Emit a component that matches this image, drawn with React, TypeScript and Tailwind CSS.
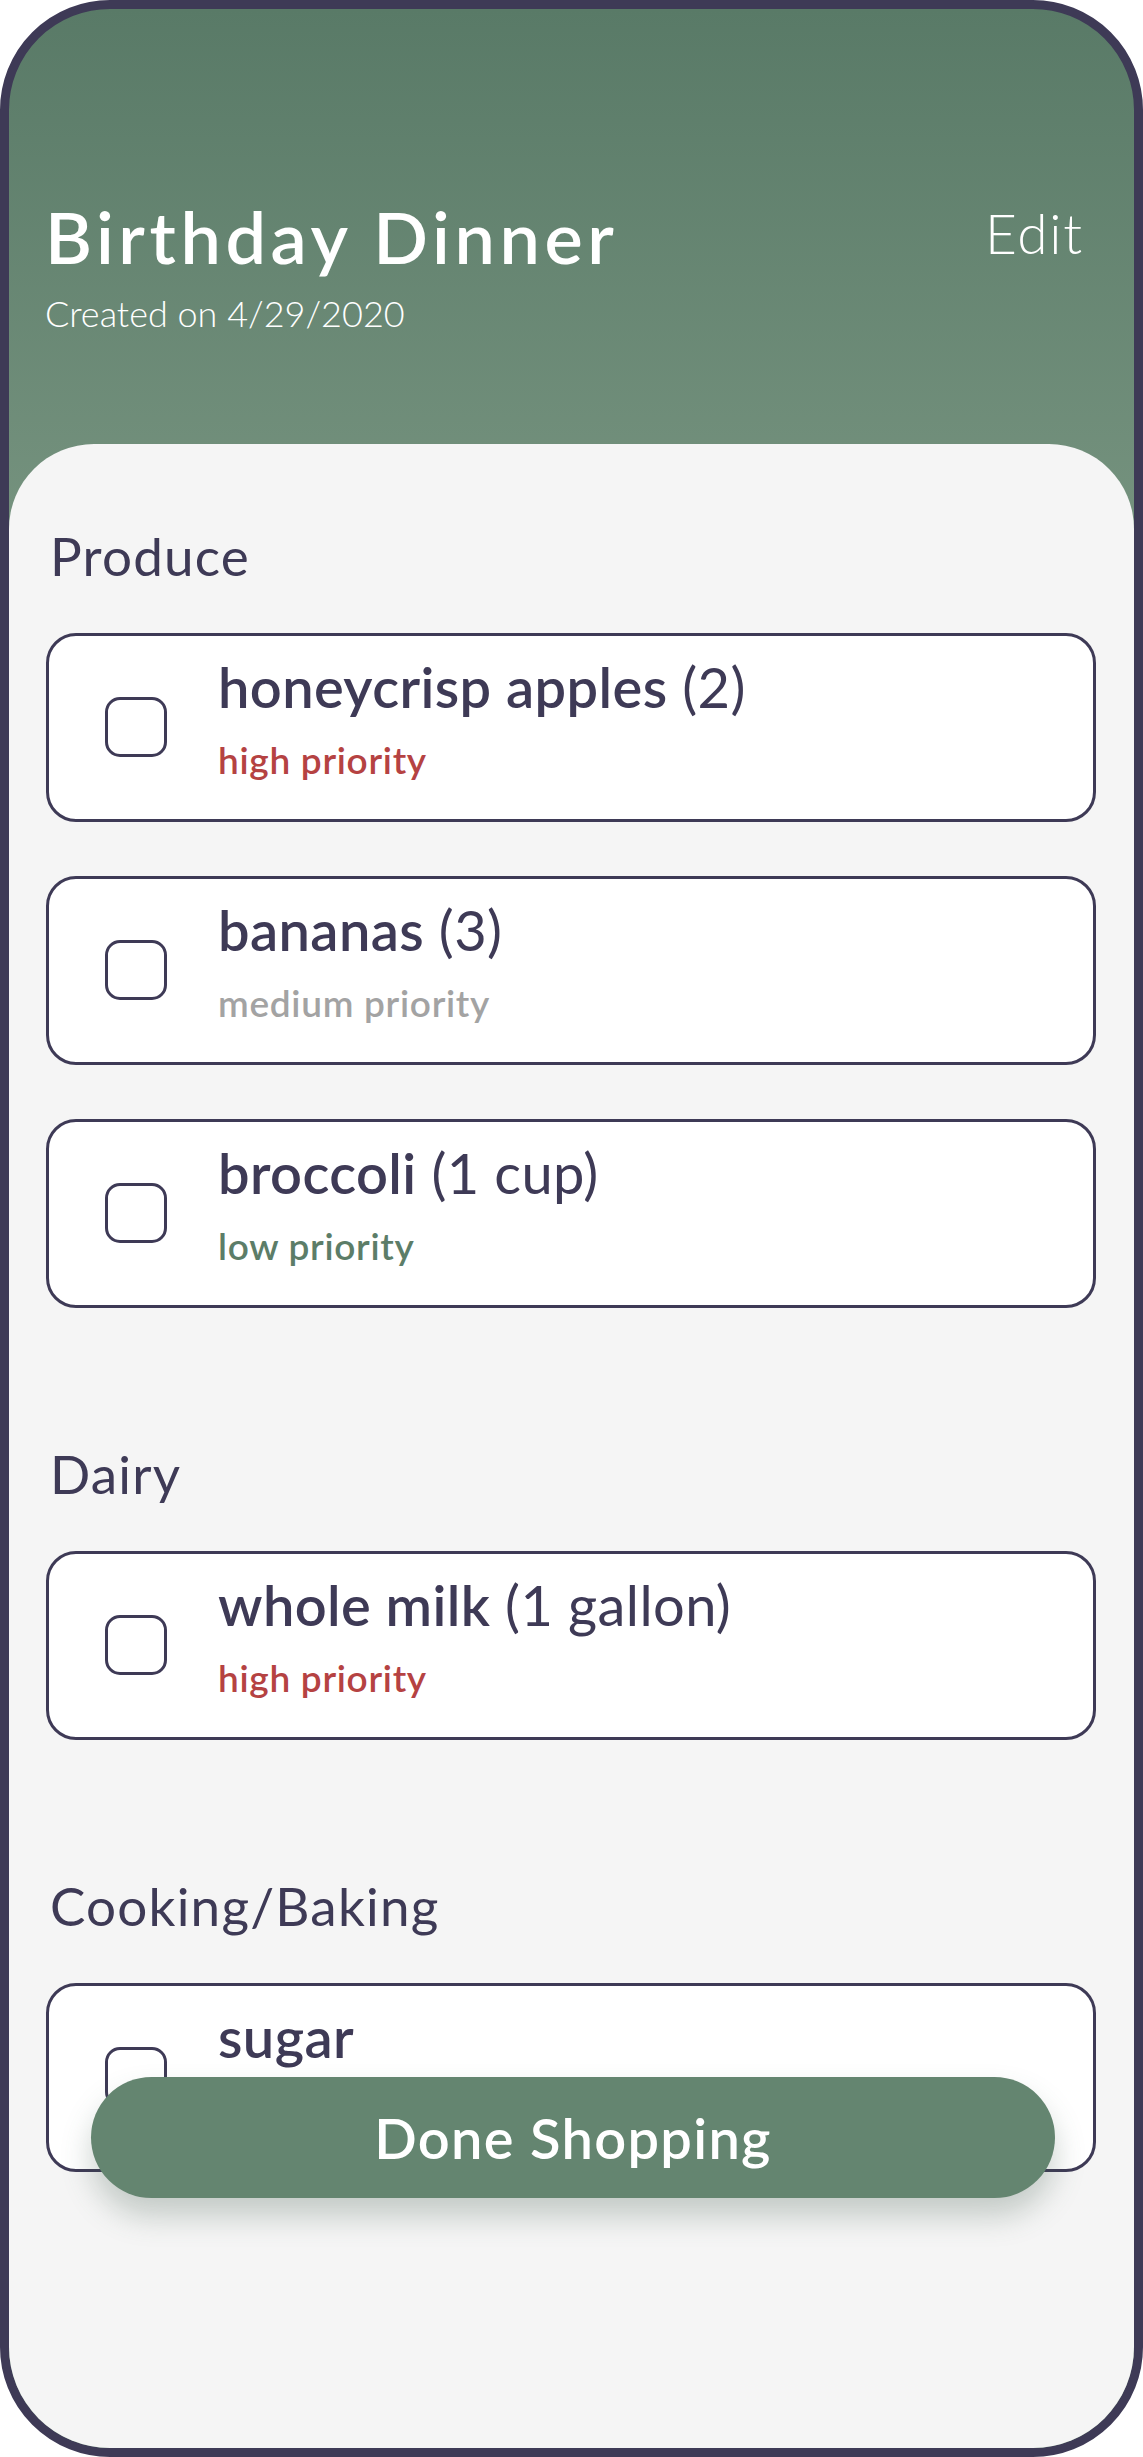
type Item = {
  name: string;
  qty?: string;
  priority?: "high" | "medium" | "low";
};

type Section = {
  title: string;
  items: Item[];
};

const sections: Section[] = [
  {
    title: "Produce",
    items: [
      { name: "honeycrisp apples", qty: "(2)", priority: "high" },
      { name: "bananas", qty: "(3)", priority: "medium" },
      { name: "broccoli", qty: "(1 cup)", priority: "low" },
    ],
  },
  {
    title: "Dairy",
    items: [{ name: "whole milk", qty: "(1 gallon)", priority: "high" }],
  },
  {
    title: "Cooking/Baking",
    items: [{ name: "sugar" }],
  },
];

const priorityClass = {
  high: "text-[#b54242]",
  medium: "text-[#a3a3a3]",
  low: "text-[#5c7d68]",
};

function ItemCard({ item }: { item: Item }) {
  return (
    <div className="flex h-[189px] items-start rounded-[30px] border-[3px] border-[#3e3a56] bg-white pl-[56px] pt-[23px]">
      <div className="mt-[38px] h-[60px] w-[62px] shrink-0 rounded-[15px] border-[3px] border-[#3e3a56]" />
      <div className="ml-[51px] flex flex-col">
        <p className="text-[56px] leading-[55px] tracking-[0.4px] text-[#3e3a56]">
          <span className="font-semibold">{item.name}</span>
          {item.qty && <span className="font-normal"> {item.qty}</span>}
        </p>
        {item.priority && (
          <p
            className={`mt-[28px] text-[37px] font-semibold leading-[36px] tracking-[0.7px] ${priorityClass[item.priority]}`}
          >
            {item.priority} priority
          </p>
        )}
      </div>
    </div>
  );
}

export default function App() {
  return (
    <div
      className="relative flex h-[2457px] w-[1143px] flex-col overflow-hidden rounded-[110px] border-[9px] border-[#3e3a56] bg-[linear-gradient(180deg,#597a67_0px,#76937f_540px)]"
      style={{ fontFamily: "Lato, 'Open Sans', sans-serif" }}
    >
      <header className="flex h-[435px] shrink-0 items-start justify-between pl-[36px] pr-[50px] pt-[191px] text-white">
        <div>
          <h1 className="text-[72px] font-semibold leading-[72px] tracking-[4.6px]">
            Birthday Dinner
          </h1>
          <p className="mt-[24px] text-[36px] font-light leading-[35px]">
            Created on 4/29/2020
          </p>
        </div>
        <button className="mt-[7px] text-[55px] font-light leading-[53px] tracking-[1.8px]">
          Edit
        </button>
      </header>

      <main className="flex-1 rounded-t-[85px] bg-[#f5f5f5] pl-[37px] pr-[38px] pt-[85px]">
        {sections.map((section, i) => (
          <section key={section.title} className={i > 0 ? "mt-[139px]" : ""}>
            <h2 className="mb-[51px] pl-[4px] text-[53px] font-normal leading-[53px] tracking-[1.2px] text-[#3e3a56]">
              {section.title}
            </h2>
            <div className="flex flex-col gap-[54px]">
              {section.items.map((item) => (
                <ItemCard key={item.name} item={item} />
              ))}
            </div>
          </section>
        ))}
      </main>

      <button className="absolute left-[82px] top-[2068px] flex h-[121px] w-[964px] items-center justify-center rounded-full bg-[#648570] text-[56px] font-semibold leading-[54px] tracking-[1.3px] text-white shadow-[0_18px_30px_rgba(70,95,80,0.28)]">
        Done Shopping
      </button>
    </div>
  );
}
